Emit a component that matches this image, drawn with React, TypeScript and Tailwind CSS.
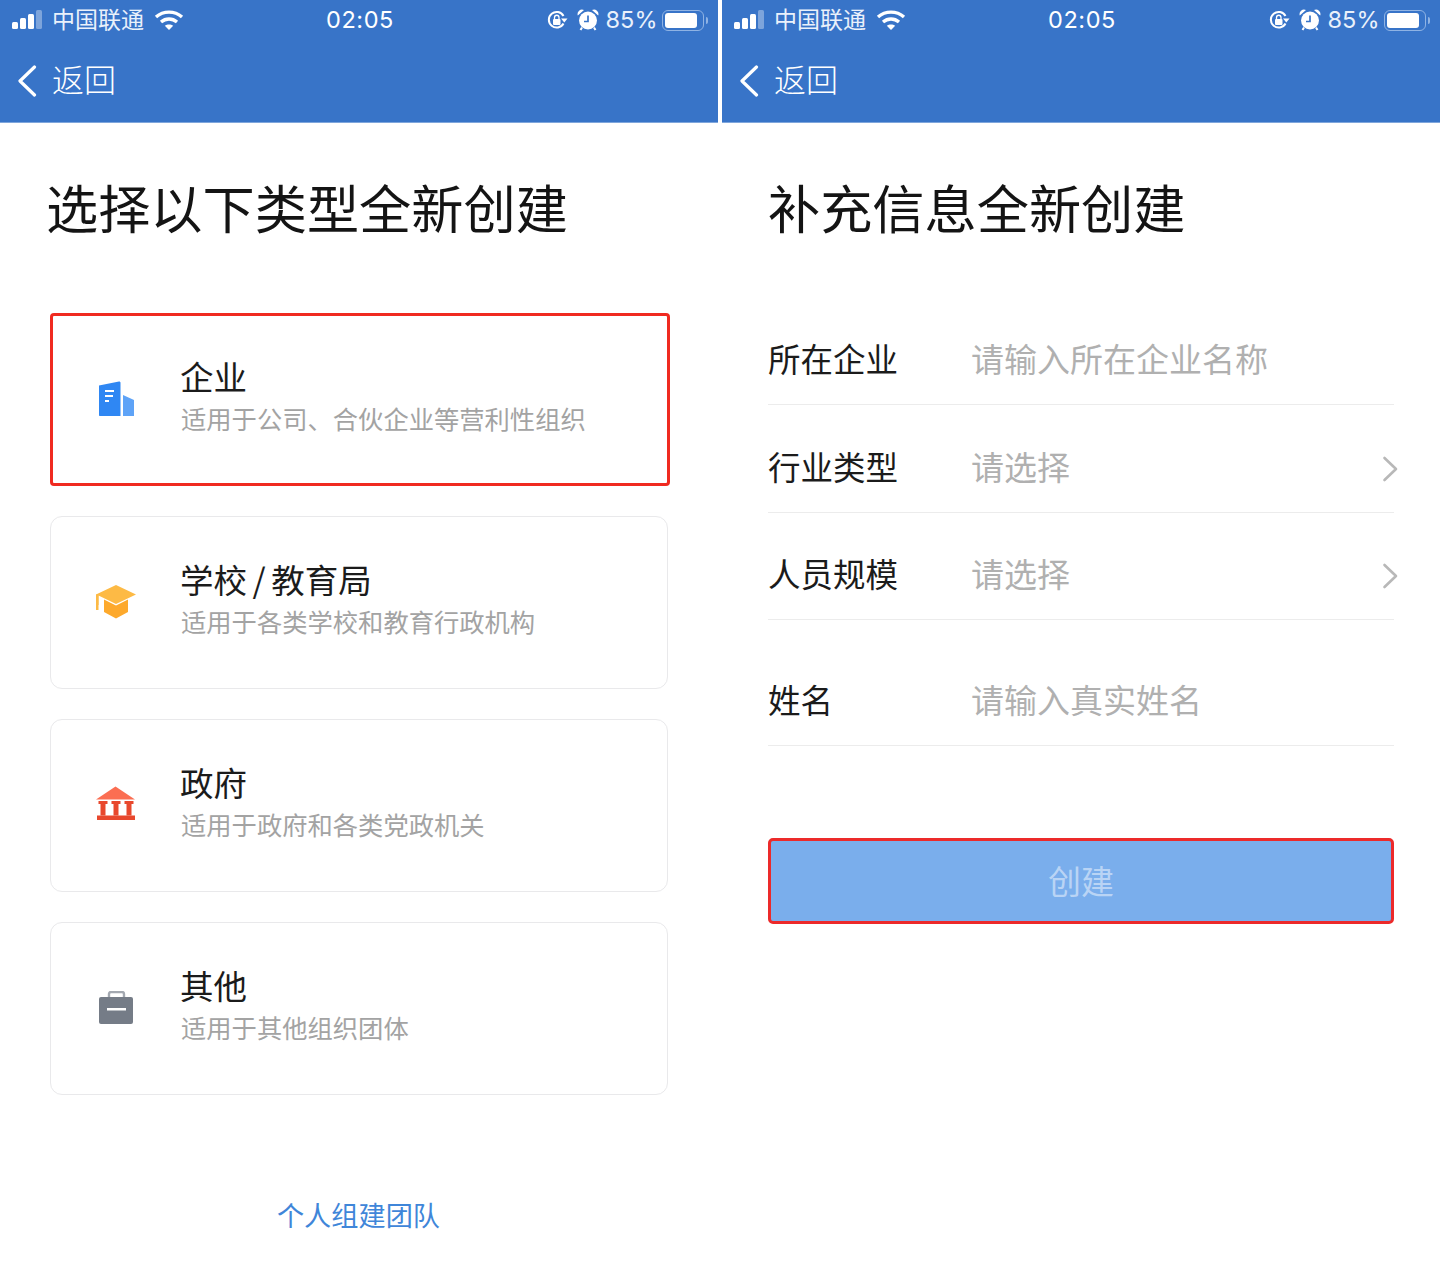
const FONT = "font-['PingFang_SC','Noto_Sans_CJK_SC','Noto_Sans',sans-serif]";

function Signal() {
  return (
    <svg width="32" height="20" viewBox="0 0 32 20" fill="white">
      <rect x="0" y="12" width="6" height="7" rx="1.5" />
      <rect x="8" y="8" width="6" height="11" rx="1.5" />
      <rect x="16" y="4" width="6" height="15" rx="1.5" />
      <rect x="24" y="0" width="6" height="19" rx="1.5" fillOpacity="0.35" />
    </svg>
  );
}

function Wifi() {
  return (
    <svg width="30" height="22" viewBox="0 0 30 22" fill="none" stroke="white" strokeWidth="3.4">
      <path d="M2 8C9.500 1.500 20.500 1.500 28 8" />
      <path d="M7 13C11.800 9 18.200 9 23 13" />
      <path d="M15 21L10.800 16.800C13.200 15 16.800 15 19.200 16.800Z" fill="white" stroke="none" />
    </svg>
  );
}

function RotationLock() {
  return (
    <svg width="22" height="22" viewBox="0 0 22 22" fill="none">
      <path d="M17.500 14.500A7.800 7.800 0 1 1 17.500 7" stroke="white" strokeWidth="2" />
      <path d="M15 9.500L21.500 9.500L18.300 13.500Z" fill="white" />
      <rect x="7" y="10" width="7.500" height="6" rx="1" fill="white" />
      <path d="M8.500 10V8.500A2.200 2.200 0 0 1 13 8.500V10" stroke="white" strokeWidth="1.300" />
    </svg>
  );
}

function Alarm() {
  return (
    <svg width="22" height="22" viewBox="0 0 22 22" fill="none">
      <circle cx="11" cy="11.500" r="9" fill="white" />
      <path d="M0.800 6.500A4.500 4.500 0 0 1 7 1ZM21.200 6.500A4.500 4.500 0 0 0 15 1Z" fill="white" />
      <path d="M11 6.500V12.500H7" stroke="#3874c8" strokeWidth="1.700" />
      <path d="M5 18.500L3.500 21M17 18.500L18.500 21" stroke="white" strokeWidth="2" />
    </svg>
  );
}

function Battery() {
  return (
    <div className="flex items-center gap-[2px]">
      <div className="w-[42px] h-[21px] rounded-[6px] border-[1.5px] border-[#8fb3e4] p-[2px]">
        <div className="w-[32px] h-full rounded-[3px] bg-white" />
      </div>
      <div className="w-[1.5px] h-[7px] rounded-r-sm bg-[#8fb3e4]" />
    </div>
  );
}

function Back() {
  return (
    <svg width="20" height="32" viewBox="0 0 20 32" fill="none" stroke="white" strokeWidth="3.200" strokeLinecap="round" strokeLinejoin="round">
      <path d="M17.500 2L3 16L17.500 30" />
    </svg>
  );
}

function Header() {
  return (
    <header className="h-[123px] bg-[#3874c8] border-b border-b-[#7fa6dc] text-white">
      <div className="h-[40px] flex items-center justify-between pl-[12px] pr-[10px]">
        <div className="flex items-center w-[300px]">
          <Signal />
          <span className="ml-[8px] mb-[4px] text-[23px] leading-[30px] text-[#eaf1fb]">中国联通</span>
          <span className="ml-[10px]"><Wifi /></span>
        </div>
        <span className="text-[23.500px] leading-[30px] tracking-[0.6px] font-['Inter',sans-serif]">02:05</span>
        <div className="flex items-center w-[300px] justify-end">
          <RotationLock />
          <span className="ml-[9px]"><Alarm /></span>
          <span className="ml-[7px] mr-[5px] text-[23.500px] leading-[30px] text-[#eaf1fb] font-['Inter',sans-serif]">85%</span>
          <Battery />
        </div>
      </div>
      <div className="h-[82px] flex items-center pl-[17px]">
        <Back />
        <span className="ml-[15px] mb-[7px] text-[32px] leading-[40px] font-light">返回</span>
      </div>
    </header>
  );
}

function BuildingIcon() {
  return (
    <svg width="36" height="36" viewBox="0 0 36 36">
      <path d="M0 4.500L20 0.500C21 0.500 21.500 1 21.500 2V35H1C0.400 35 0 34.600 0 34Z" fill="#2f87f3" />
      <path d="M24 14L35 19V35H24Z" fill="#5ea3f7" />
      <path d="M6 10H15M6 15H14M6 20H10" stroke="white" strokeWidth="2" />
    </svg>
  );
}

function CapIcon() {
  return (
    <svg width="42" height="34" viewBox="0 0 42 34">
      <path d="M21 0L41 9.500L21 19L3.500 10.500V20H1V9.500Z" fill="#fdba45" />
      <path d="M1 9.500H3.500V25H1Z" fill="#fdba45" />
      <path d="M9 14.500L21 20.500L33 14.500V27L21 33.500L9 27Z" fill="#fda92c" />
    </svg>
  );
}

function BankIcon() {
  return (
    <svg width="40" height="38" viewBox="0 0 40 38">
      <path d="M19.500 0.500L39 13.500H0Z" fill="#fb6e52" />
      <path d="M2.500 15H11.500V18H9.500V29.500H4.500V18H2.500ZM15.500 15H24.500V18H22.500V29.500H17.500V18H15.500ZM28.500 15H37.500V18H35.500V29.500H30.500V18H28.500Z" fill="#e8482d" />
      <rect x="1" y="29.500" width="38" height="4.500" fill="#e8482d" />
    </svg>
  );
}

function CaseIcon() {
  return (
    <svg width="36" height="34" viewBox="0 0 36 34">
      <path d="M11 7V3C11 1.800 11.800 1 13 1H24C25.200 1 26 1.800 26 3V7" fill="none" stroke="#a3a8b0" strokeWidth="2.400" />
      <rect x="1" y="6" width="34" height="27" rx="2" fill="#757c87" />
      <rect x="9" y="17" width="19" height="2.500" fill="white" />
    </svg>
  );
}

const CARDS = [
  { id: "company", title: "企业", desc: "适用于公司、合伙企业等营利性组织", icon: <BuildingIcon />, selected: true },
  { id: "school", title: <>学校<span className="mx-[5.500px]">/</span>教育局</>, desc: "适用于各类学校和教育行政机构", icon: <CapIcon /> },
  { id: "gov", title: "政府", desc: "适用于政府和各类党政机关", icon: <BankIcon /> },
  { id: "other", title: "其他", desc: "适用于其他组织团体", icon: <CaseIcon /> },
];

function TypeCard({ title, desc, icon, selected }: { title: React.ReactNode; desc: string; icon: React.ReactNode; selected?: boolean }) {
  return (
    <div
      className={
        selected
          ? "h-[173px] w-[620px] rounded-[4px] border-[3px] border-[#f02a20] flex items-center"
          : "h-[173px] w-[618px] rounded-[12px] border border-[#e9e9eb] flex items-center"
      }
    >
      <div className={selected ? "w-[128px] pb-[1px] flex justify-center shrink-0" : "w-[130px] pb-[1px] flex justify-center shrink-0"}>{icon}</div>
      <div className="pb-[9px]">
        <div className="-ml-[1px] text-[33.500px] leading-[44px] text-[#1b1b1b]">{title}</div>
        <div className="mt-[2px] text-[25.300px] leading-[36px] text-[#a3a3a3] whitespace-nowrap">{desc}</div>
      </div>
    </div>
  );
}

function Chevron() {
  return (
    <svg width="16" height="26" viewBox="0 0 16 26" fill="none" stroke="#b8b8b8" strokeWidth="2.600" strokeLinecap="round" strokeLinejoin="round">
      <path d="M2.500 2L14 13L2.500 24" />
    </svg>
  );
}

function FormRow({ label, placeholder, arrow, height }: { label: string; placeholder: string; arrow?: boolean; height: string }) {
  return (
    <div className={`${height} flex items-end border-b border-b-[#ececec] pb-[24px]`}>
      <span className="w-[204px] text-[32.500px] leading-[44px] text-[#1b1b1b] shrink-0">{label}</span>
      <span className="flex-1 -ml-[1px] text-[33px] leading-[44px] text-[#b0b0b0]">{placeholder}</span>
      {arrow && (
        <span className="mr-[-4px] mb-[6px]">
          <Chevron />
        </span>
      )}
    </div>
  );
}

export default function App() {
  return (
    <div className={`w-[1440px] h-[1268px] bg-white flex justify-between overflow-hidden ${FONT}`}>
      <section className="w-[718px]">
        <Header />
        <div className="pl-[46px] pt-[47px] text-[52.200px] leading-[72px] text-[#141414]">选择以下类型全新创建</div>
        <div className="ml-[50px] mt-[71px] flex flex-col gap-[30px]">
          {CARDS.map(({ id, ...c }) => (
            <TypeCard key={id} {...c} />
          ))}
        </div>
        <div className="mt-[100px] ml-[-1px] text-center text-[27.200px] leading-[38px] text-[#3f86d9]">个人组建团队</div>
      </section>

      <section className="w-[718px]">
        <Header />
        <div className="pl-[46px] pt-[47px] text-[52.200px] leading-[72px] text-[#141414]">补充信息全新创建</div>
        <div className="ml-[46px] w-[626px] mt-[50px]">
          <FormRow label="所在企业" placeholder="请输入所在企业名称" height="h-[113px]" />
          <FormRow label="行业类型" placeholder="请选择" arrow height="h-[108px]" />
          <FormRow label="人员规模" placeholder="请选择" arrow height="h-[107px]" />
          <FormRow label="姓名" placeholder="请输入真实姓名" height="h-[126px]" />
          <button className="mt-[92px] w-full h-[86px] rounded-[5px] border-[3px] border-[#ec2a2a] bg-[#7aaeec] text-[33px] text-[#b9d4f5]">
            创建
          </button>
        </div>
      </section>
    </div>
  );
}
